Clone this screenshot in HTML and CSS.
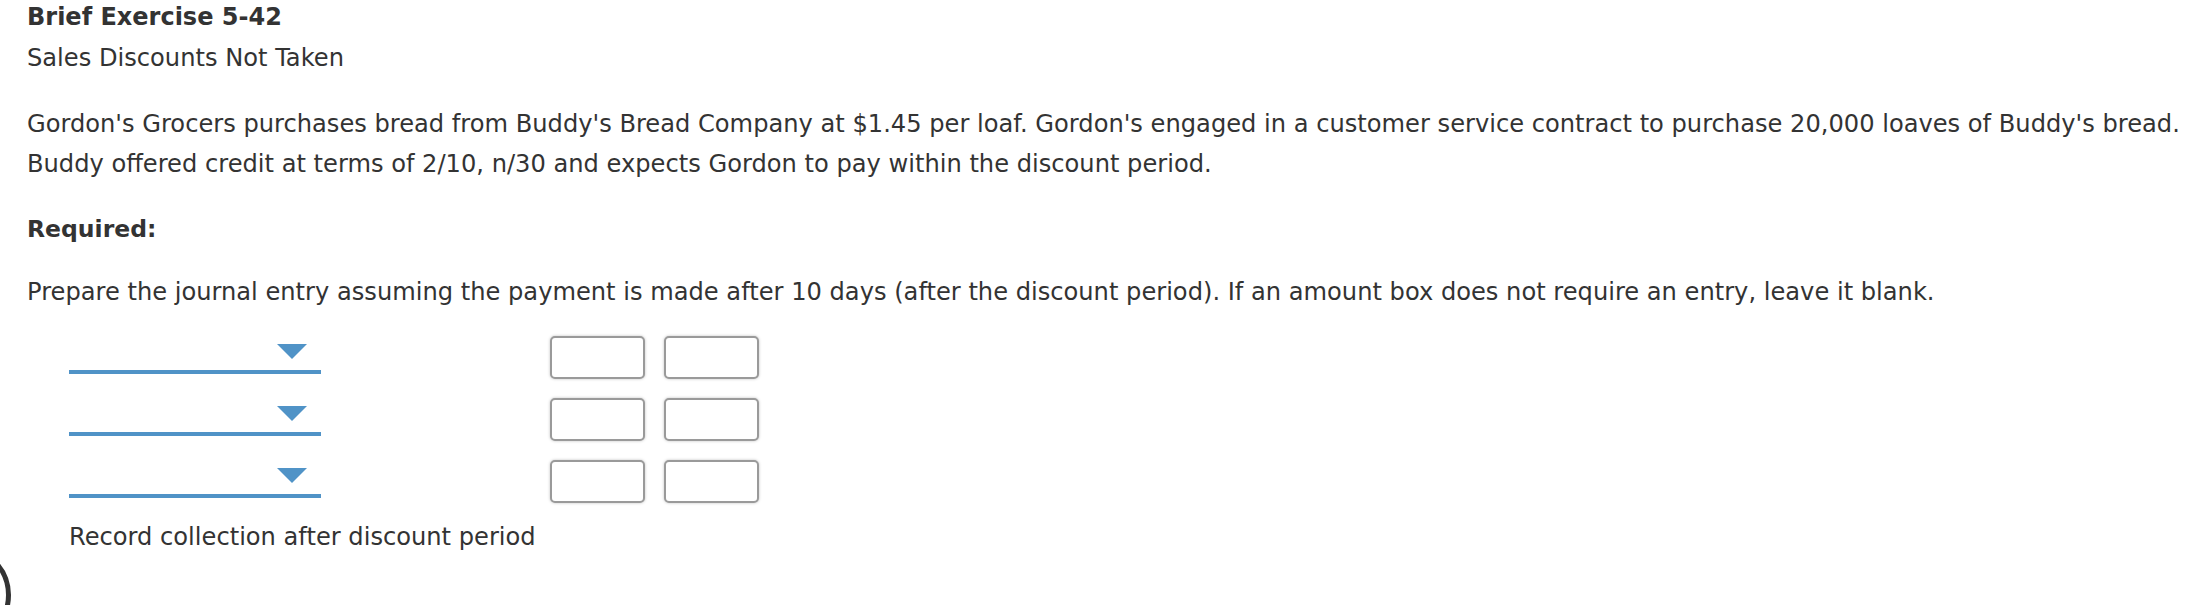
FILE: index.html
```html
<!DOCTYPE html>
<html lang="en">
<head>
<meta charset="utf-8">
<title>Brief Exercise 5-42</title>
<link rel="stylesheet" href="styles.css">
</head>
<body>
<div class="page">
  <h1 class="title">Brief Exercise 5-42</h1>
  <div class="subtitle">Sales Discounts Not Taken</div>
  <p class="para">Gordon's Grocers purchases bread from Buddy's Bread Company at $1.45 per loaf. Gordon's engaged in a customer service contract to purchase 20,000 loaves of Buddy's bread. Buddy offered credit at terms of 2/10, n/30 and expects Gordon to pay within the discount period.</p>
  <h2 class="required">Required:</h2>
  <p class="prompt">Prepare the journal entry assuming the payment is made after 10 days (after the discount period). If an amount box does not require an entry, leave it blank.</p>
  <div class="journal">
    <div class="jrow">
      <div class="dropdown"><span class="caret"></span></div>
      <div class="amount"></div>
      <div class="amount"></div>
    </div>
    <div class="jrow">
      <div class="dropdown"><span class="caret"></span></div>
      <div class="amount"></div>
      <div class="amount"></div>
    </div>
    <div class="jrow">
      <div class="dropdown"><span class="caret"></span></div>
      <div class="amount"></div>
      <div class="amount"></div>
    </div>
  </div>
  <div class="note">Record collection after discount period</div>
</div>
<div class="ring-clip"><div class="floating-ring"></div></div>
</body>
</html>
```

FILE: styles.css
```css
html, body {
  margin: 0;
  padding: 0;
  background: #fff;
  overflow: hidden;
}
body {
  font-family: "DejaVu Sans", Verdana, sans-serif;
  font-size: 24.15px;
  color: #333;
  width: 2209px;
  height: 605px;
  position: relative;
}
.page {
  padding: 2px 0 0 27px;
  width: 2170px;
}
.title {
  font-size: 24px;
  font-weight: bold;
  line-height: 30px;
  margin: 0;
}
.subtitle {
  line-height: 40px;
  margin-top: 6px;
}
.para {
  line-height: 40px;
  margin: 26px 0 0;
}
.required {
  font-size: 23.5px;
  font-weight: bold;
  line-height: 40px;
  margin: 25px 0 0;
}
.prompt {
  line-height: 40px;
  margin: 23px 0 0;
}
.journal {
  margin-top: 24px;
  padding-left: 42px;
  display: flex;
  flex-direction: column;
  gap: 19px;
}
.jrow {
  display: flex;
  align-items: flex-start;
  height: 43px;
}
.dropdown {
  width: 252px;
  height: 38px;
  border-bottom: 4px solid #5093c7;
  display: flex;
  justify-content: flex-end;
  align-items: flex-start;
  padding-top: 8px;
  padding-right: 14px;
  box-sizing: border-box;
}
.caret {
  width: 0;
  height: 0;
  border-left: 15px solid transparent;
  border-right: 15px solid transparent;
  border-top: 15px solid #5093c7;
}
.amount {
  width: 95px;
  height: 43px;
  box-sizing: border-box;
  border: 2px solid #9a9a9a;
  border-radius: 5px;
  background: #fff;
  box-shadow: 0 0 3px rgba(0, 0, 0, 0.25);
  margin-left: 19px;
}
.dropdown + .amount {
  margin-left: 229px;
}
.note {
  margin-top: 14px;
  padding-left: 42px;
  line-height: 40px;
}
.ring-clip {
  position: absolute;
  left: 0;
  top: 555px;
  width: 20px;
  height: 50px;
  overflow: hidden;
}
.floating-ring {
  position: absolute;
  left: -89px;
  top: -10px;
  width: 100px;
  height: 100px;
  box-sizing: border-box;
  border: 5px solid #333;
  border-radius: 50%;
}
```
